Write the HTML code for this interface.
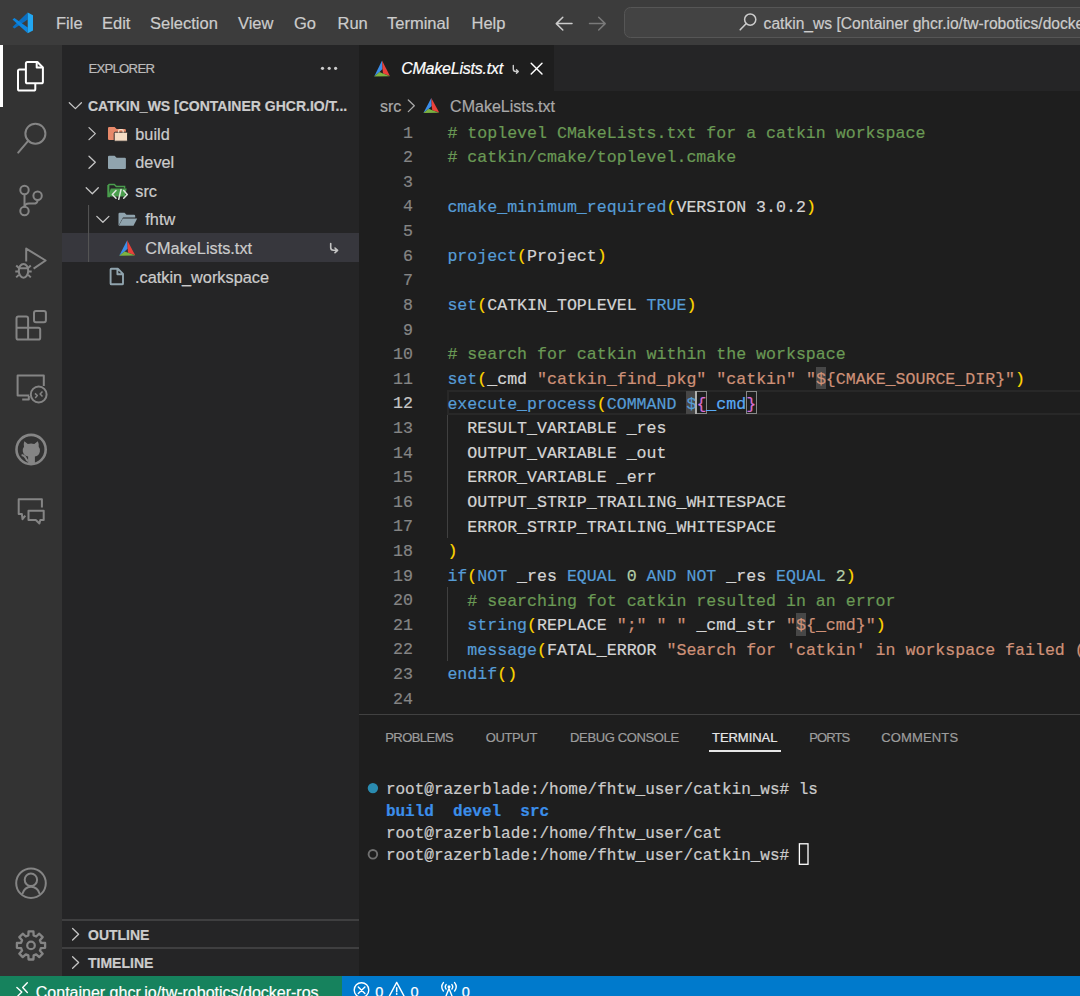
<!DOCTYPE html>
<html><head><meta charset="utf-8">
<style>
*{margin:0;padding:0;box-sizing:border-box}
html,body{width:1080px;height:996px;overflow:hidden;background:#1e1e1e;font-family:"Liberation Sans",sans-serif;color:#cccccc}
div{-webkit-text-stroke:0.2px currentColor}
.abs{position:absolute}
#title{left:0;top:0;width:1080px;height:45px;background:#3c3c3c}
.menu{position:absolute;top:13px;font-size:16.5px;color:#cccccc;line-height:20px;white-space:nowrap}
#act{left:0;top:45px;width:62px;height:931px;background:#333333}
#side{left:62px;top:45px;width:297px;height:931px;background:#252526}
#editor{left:359px;top:45px;width:721px;height:931px;background:#1e1e1e}
#status{left:0;top:976px;width:1080px;height:20px;background:#007acc}
.row{position:absolute;left:0;width:297px;height:29px;font-size:16.3px;line-height:29px;color:#cccccc;white-space:nowrap}
.code{position:absolute;left:447px;font-family:"Liberation Mono",monospace;font-size:16.6px;line-height:24.62px;white-space:pre;color:#d4d4d4}
.ln{position:absolute;left:380px;width:33px;text-align:right;font-family:"Liberation Mono",monospace;font-size:16.6px;line-height:24.62px;color:#858585}
.c{color:#6a9955}.k{color:#569cd6}.s{color:#ce9178}.p{color:#ffd700}.b{color:#da70d6}.v{color:#59aaf5}.n{color:#b5cea8}
.ptab{top:729px;font-size:13px;line-height:18px;color:#9d9d9d;white-space:nowrap}
.term{position:absolute;left:385.9px;font-family:"Liberation Mono",monospace;font-size:16px;line-height:22.2px;white-space:pre;color:#cccccc}
</style></head><body>
<div id="title" class="abs">
  <svg class="abs" style="left:0;top:0" width="1080" height="45" viewBox="0 0 1080 45" fill="none">
    <defs><linearGradient id="vsg" x1="0" y1="0" x2="1" y2="0"><stop offset="0" stop-color="#0065a9"/><stop offset="1" stop-color="#1f9cf0"/></linearGradient></defs>
    <path d="M27.7,12.6 L27.7,19.4 L14.5,28.6 L12.5,26.9 Z" fill="#0a6fc2"/>
    <path d="M12.5,19.5 L14.4,17.9 L27.7,27.4 L27.7,33.3 Z" fill="#0c86e0"/>
    <path d="M27.7,12.6 L33,15.3 V30.6 L27.7,33.3 Z" fill="#22a7f2"/>
    <path d="M572,23.6 H556.5 M562.8,17.2 L556.3,23.6 L562.8,30" stroke="#cccccc" stroke-width="1.5" stroke-linecap="round" stroke-linejoin="round"/>
    <path d="M589.5,23.6 H605 M598.7,17.2 L605.2,23.6 L598.7,30" stroke="#7a7a7a" stroke-width="1.5" stroke-linecap="round" stroke-linejoin="round"/>
    <rect x="624.5" y="7.5" width="470" height="30" rx="6" fill="#434343" stroke="#565656" stroke-width="1"/>
    <circle cx="750.2" cy="19.6" r="5.6" stroke="#cccccc" stroke-width="1.5"/>
    <path d="M746.3,23.5 L740.2,29.8" stroke="#cccccc" stroke-width="1.6" stroke-linecap="round"/>
  </svg>
  <div class="menu" style="left:763.6px;top:14.2px;font-size:15.6px">catkin_ws [Container ghcr.io/tw-robotics/docker-ros]</div>
  <div class="menu" style="left:56px">File</div>
  <div class="menu" style="left:102px">Edit</div>
  <div class="menu" style="left:150px">Selection</div>
  <div class="menu" style="left:238px">View</div>
  <div class="menu" style="left:294px">Go</div>
  <div class="menu" style="left:337.5px">Run</div>
  <div class="menu" style="left:387px">Terminal</div>
  <div class="menu" style="left:471.5px">Help</div>
</div>
<div id="act" class="abs"></div>
<svg class="abs" style="left:0;top:0" width="62" height="976" viewBox="0 0 62 976" fill="none" stroke-width="2" stroke-linejoin="round">
  <rect x="0" y="45" width="3" height="62" fill="#ffffff" stroke="none"/>
  <!-- explorer -->
  <g stroke="#ffffff">
    <path d="M27.4,62 H37.4 L42.9,67.5 V81.7 Q42.9,83.3 41.3,83.3 H27.5 Q25.9,83.3 25.9,81.7 V63.5 Q25.9,62 27.4,62 Z"/>
    <path d="M36.7,62.3 V67.6 H42.7"/>
    <path d="M25.9,69.5 H19.6 Q18,69.5 18,71.1 V88.9 Q18,90.5 19.6,90.5 H33.7 Q35.3,90.5 35.3,88.9 V83.3"/>
  </g>
  <g stroke="#858585">
    <!-- search -->
    <circle cx="35.4" cy="133.7" r="10"/>
    <path d="M28.4,140.6 L18.2,152.6" stroke-linecap="round"/>
    <!-- scm -->
    <circle cx="24.5" cy="190" r="4.2"/>
    <circle cx="24.5" cy="211" r="4.2"/>
    <circle cx="37.6" cy="195.7" r="4.2"/>
    <path d="M24.5,194.2 V206.8"/>
    <path d="M37.6,199.9 Q37.6,203.6 33.5,203.6 H29 Q24.5,203.6 24.5,207.5"/>
    <!-- debug -->
    <path d="M26.2,261.4 V248.6 L45.6,260.5 L33.6,268.6"/>
    <ellipse cx="23.5" cy="270.8" rx="4.7" ry="6.9"/>
    <path d="M19,268.3 H28 M16.2,265.4 L18.9,267.9 M30.8,265.4 L28.1,267.9 M15.3,271.5 H18.6 M28.4,271.5 H31.7 M16.2,277.4 L18.8,274.9 M30.8,277.4 L28.2,274.9"/>
    <!-- extensions -->
    <path d="M18.4,316.6 H26.2 Q28.1,316.6 28.1,318.5 V327.7 H38.3 Q40.2,327.7 40.2,329.6 V337.7 Q40.2,339.6 38.3,339.6 H18.4 Q16.5,339.6 16.5,337.7 V318.5 Q16.5,316.6 18.4,316.6 Z M16.5,327.7 H28.1 V339.6"/>
    <rect x="34" y="310.9" width="11.9" height="11.4" rx="2"/>
    <!-- remote explorer -->
    <path d="M29.2,395.6 H17.6 V375.5 H43.8 V385.9"/>
    <path d="M22.2,399.6 H28.8 V396"/>
    <circle cx="38.7" cy="394.5" r="7.9"/>
    <path d="M35,393.4 L37.3,395.6 L35.2,397.9 M42.5,391.5 L40.1,394 L42.5,396.5" stroke-width="1.5"/>
    <!-- github -->
    <circle cx="31.1" cy="449.5" r="14.6" stroke-width="2.6"/>
    <path d="M24.3,441.3 L27.8,443.9 Q31,443.2 34.3,443.9 L37.8,441.3 Q39.3,444.5 38.7,446.7 Q40.3,448.6 39.9,451.4 Q39.1,455.6 34.9,456.6 V463 Q31.5,463.8 28.1,463 V456.6 Q23.8,455.6 22.8,451.4 Q22.4,448.6 24,446.7 Q23.3,444.5 24.3,441.3 Z" fill="#858585" stroke="none"/>
    <path d="M21.6,455 Q24.5,455.4 25.8,458.2 Q26.8,460.6 28.2,461" stroke-width="2"/>
    <!-- comments -->
    <path d="M41.9,507.4 V499.2 H18.7 V514.1 H21.9 L22.5,519.2 L25.3,515.6"/>
    <path d="M28.5,510.8 H43.7 V520.1 H40.3 L39.4,523.5 L35.8,520.1 H28.5 Z"/>
    <!-- account -->
    <circle cx="31" cy="883.2" r="14.8"/>
    <circle cx="30.9" cy="879.8" r="6.2"/>
    <path d="M22.3,894 Q24.6,886.8 31,886.8 Q37.4,886.8 39.8,894"/>
    <!-- gear -->
    <path d="M28.35,935.45 L28.58,931.31 L33.42,931.31 L33.65,935.45 L36.17,936.49 L39.26,933.72 L42.68,937.14 L39.91,940.23 L40.95,942.75 L45.09,942.98 L45.09,947.82 L40.95,948.05 L39.91,950.57 L42.68,953.66 L39.26,957.08 L36.17,954.31 L33.65,955.35 L33.42,959.49 L28.58,959.49 L28.35,955.35 L25.83,954.31 L22.74,957.08 L19.32,953.66 L22.09,950.57 L21.05,948.05 L16.91,947.82 L16.91,942.98 L21.05,942.75 L22.09,940.23 L19.32,937.14 L22.74,933.72 L25.83,936.49Z" stroke-width="2.3"/>
    <circle cx="31" cy="945.4" r="3.8" stroke-width="2.2"/>
  </g>
</svg>

<div id="side" class="abs">
  <div class="abs" style="left:26.4px;top:14.3px;font-size:13.2px;line-height:20px;letter-spacing:-0.75px;color:#bbbbbb">EXPLORER</div>
  <div class="abs" style="left:0;top:188px;width:297px;height:29px;background:#37373d"></div>
  <div class="abs" style="left:26px;top:51px;font-size:14px;font-weight:bold;line-height:20px;color:#cccccc;white-space:nowrap">CATKIN_WS [CONTAINER GHCR.IO/T...</div>
  <div class="row" style="left:73.3px;top:74.65px">build</div>
  <div class="row" style="left:73.3px;top:103.25px">devel</div>
  <div class="row" style="left:73.3px;top:131.85px">src</div>
  <div class="row" style="left:83.3px;top:160.45px">fhtw</div>
  <div class="row" style="left:83.3px;top:189.05px">CMakeLists.txt</div>
  <div class="row" style="left:73px;top:217.65px">.catkin_workspace</div>
  <div class="abs" style="left:0;top:874px;width:297px;height:2px;background:#3f3f40"></div>
  <div class="abs" style="left:0;top:902.2px;width:297px;height:2px;background:#3f3f40"></div>
  <div class="abs" style="left:26px;top:880.15px;font-size:14px;font-weight:bold;line-height:20px;color:#cccccc">OUTLINE</div>
  <div class="abs" style="left:26px;top:908.45px;font-size:14px;font-weight:bold;line-height:20px;color:#cccccc">TIMELINE</div>
</div>
<svg class="abs" style="left:62px;top:45px" width="297" height="931" viewBox="62 45 297 931" fill="none">
  <g fill="#cccccc"><circle cx="322.5" cy="68.3" r="1.6"/><circle cx="329.2" cy="68.3" r="1.6"/><circle cx="335.6" cy="68.3" r="1.6"/></g>
  <g stroke="#c5c5c5" stroke-width="1.3" stroke-linecap="round" stroke-linejoin="round">
    <path d="M69.3,102.8 L75.4,108.6 L81.4,102.8"/>
    <path d="M89,127.6 L95.3,133.6 L89,139.6"/>
    <path d="M89,156.3 L95.3,162.3 L89,168.3"/>
    <path d="M86.2,187.7 L92.3,193.7 L98.3,187.7"/>
    <path d="M96.8,216.4 L102.9,222.3 L108.9,216.4"/>
    <path d="M72.6,928.5 L78.6,934.2 L72.6,940"/>
    <path d="M72.6,956.7 L78.6,962.5 L72.6,968.3"/>
  </g>
  <path d="M88.6,205 V262" stroke="#585858" stroke-width="1"/>
  <!-- build folder -->
  <path d="M108,128.2 Q108,127.1 109.1,127.1 H114.6 L116.6,129.1 H124.8 Q125.9,129.1 125.9,130.2 V138.9 Q125.9,140 124.8,140 H109.1 Q108,140 108,138.9 Z" fill="#e8896a"/>
  <path d="M115.2,132.2 H126.5 Q127.5,132.2 127.5,133.2 V140.2 Q127.5,141.2 126.5,141.2 H115.2 Q114.2,141.2 114.2,140.2 V133.2 Q114.2,132.2 115.2,132.2 Z" fill="#f6dcc4" stroke="#252526" stroke-width="0.9"/>
  <path d="M118.6,132.4 V131 Q118.6,129.6 120,129.6 H121.8 Q123.2,129.6 123.2,131 V132.4" stroke="#f6dcc4" stroke-width="1.3"/>
  <!-- devel folder -->
  <path d="M108,156.8 Q108,155.7 109.1,155.7 H114.6 L116.6,157.7 H124.8 Q125.9,157.7 125.9,158.8 V167.9 Q125.9,169 124.8,169 H109.1 Q108,169 108,167.9 Z" fill="#90a4ae"/>
  <!-- src folder green -->
  <path d="M108.7,196 V185.2 Q108.7,184.5 109.4,184.5 H114.3 L116.3,186.5 H124.6 V188.6" stroke="#4a9e4d" stroke-width="1.4"/>
  <path d="M110.8,188.6 H126.7 L125,196.5 H108 Z" fill="#4a9e4d"/>
  <path d="M108,185 V196.5 H110" stroke="#4a9e4d" stroke-width="1.4"/>
  <g stroke="#dfe6df" stroke-width="1.5" stroke-linecap="round" stroke-linejoin="round"><path d="M116,190.6 L112.3,194.4 L116,198.2 M123.7,190.6 L127.3,194.4 L123.7,198.2 M121,189.6 L118.7,199.3"/></g>
  <!-- fhtw open folder -->
  <path d="M118.5,214 Q118.5,212.8 119.7,212.8 H124.5 L126.5,214.8 H134 Q135.2,214.8 135.2,216 V217.5 H123 L118.5,225.7 Z" fill="#90a4ae"/>
  <path d="M122.8,218.6 H137.2 L133.5,225.7 H118.8 Z" fill="#90a4ae"/>
  <!-- cmake icon -->
  <use href="#cmk" transform="translate(119.2,240.3) scale(16,15.5)"/>
  <!-- file icon -->
  <path d="M111.4,268.7 H117.8 L123,273.9 V283.4 Q123,284.3 122.1,284.3 H111.4 Q110.6,284.3 110.6,283.4 V269.5 Q110.6,268.7 111.4,268.7 Z M117.4,269 V274.3 H122.8" stroke="#90a4ae" stroke-width="1.9" stroke-linejoin="round"/>
  <!-- arrow symbol -->
  <path d="M330.7,243.5 V247.5 Q330.7,250.3 333.5,250.3 H337 M335,248 L337.6,250.3 L335,252.6" stroke="#c5c5c5" stroke-width="1.6" stroke-linecap="round" stroke-linejoin="round"/>
</svg>
<div id="editor" class="abs"></div>
<!-- tabs -->
<div class="abs" style="left:359px;top:45px;width:721px;height:46px;background:#252526"></div>
<div class="abs" style="left:359px;top:45px;width:195px;height:46px;background:#1e1e1e"></div>
<div class="abs" style="left:401.2px;top:59px;font-size:16px;line-height:20px;font-style:italic;letter-spacing:-0.23px;color:#ffffff;white-space:nowrap">CMakeLists.txt</div>
<div class="abs" style="left:379.9px;top:97px;font-size:16px;line-height:20px;color:#a9a9a9;white-space:nowrap">src</div>
<div class="abs" style="left:450.1px;top:97px;font-size:16px;line-height:20px;color:#a9a9a9;white-space:nowrap">CMakeLists.txt</div>
<svg class="abs" style="left:359px;top:45px" width="721" height="80" viewBox="359 45 721 80" fill="none">
  <defs>
    <g id="cmk">
      <path d="M0.5,0 L0,1 L0.34,0.72 L0.53,0.53 Z" fill="#3b8eea"/>
      <path d="M0.5,0 L0.53,0.53 L0.56,0.81 L1,0.97 Z" fill="#e8403a"/>
      <path d="M0,1 L1,0.98 L0.56,0.81 L0.34,0.72 Z" fill="#7cb342"/>
      
    </g>
  </defs>
  <use href="#cmk" transform="translate(374.2,60.5) scale(15.7,16)"/>
  <use href="#cmk" transform="translate(423.4,98) scale(15.8,15)"/>
  <path d="M513.3,65.5 V69 Q513.3,71.5 515.8,71.5 H518 M516.5,69.8 L518.3,71.5 L516.5,73.2" stroke="#cccccc" stroke-width="1.4" stroke-linecap="round" stroke-linejoin="round"/>
  <path d="M531.2,63.2 L542,74 M542,63.2 L531.2,74" stroke="#ffffff" stroke-width="1.45" stroke-linecap="round"/>
  <path d="M408.3,100 L414.3,105.8 L408.3,111.6" stroke="#a9a9a9" stroke-width="1.3" stroke-linecap="round" stroke-linejoin="round"/>
</svg>
<!-- current line -->
<div class="abs" style="left:447.2px;top:390.42px;width:700px;height:24.62px;border:2px solid #282828"></div>
<!-- word highlights -->
<div class="abs" style="left:815.92px;top:366.80px;width:9.96px;height:22.62px;background:#474747"></div>
<div class="abs" style="left:686.44px;top:391.42px;width:9.96px;height:22.62px;background:#474747"></div>
<div class="abs" style="left:796.00px;top:613.00px;width:9.96px;height:22.62px;background:#474747"></div>
<div class="abs" style="left:696.40px;top:391.42px;width:10.96px;height:22.62px;border:1px solid #888888"></div>
<div class="abs" style="left:746.20px;top:391.42px;width:10.96px;height:22.62px;border:1px solid #888888"></div>
<!-- indent guides -->
<div class="abs" style="left:447px;top:415.04px;width:1.3px;height:123.10px;background:#404040"></div>
<div class="abs" style="left:447px;top:587.38px;width:1.3px;height:73.86px;background:#404040"></div>
<div class="abs" style="left:373px;top:121.66px;width:40px;text-align:right;font-family:'Liberation Mono',monospace;font-size:16.6px;line-height:24.62px;color:#858585"><div style="height:24.62px;">1</div><div style="height:24.62px;">2</div><div style="height:24.62px;">3</div><div style="height:24.62px;">4</div><div style="height:24.62px;">5</div><div style="height:24.62px;">6</div><div style="height:24.62px;">7</div><div style="height:24.62px;">8</div><div style="height:24.62px;">9</div><div style="height:24.62px;">10</div><div style="height:24.62px;">11</div><div style="height:24.62px;color:#c6c6c6">12</div><div style="height:24.62px;">13</div><div style="height:24.62px;">14</div><div style="height:24.62px;">15</div><div style="height:24.62px;">16</div><div style="height:24.62px;">17</div><div style="height:24.62px;">18</div><div style="height:24.62px;">19</div><div style="height:24.62px;">20</div><div style="height:24.62px;">21</div><div style="height:24.62px;">22</div><div style="height:24.62px;">23</div><div style="height:24.62px;">24</div></div>
<div class="code" style="left:447.4px;top:121.66px"><span class="c"># toplevel CMakeLists.txt for a catkin workspace</span>
<span class="c"># catkin/cmake/toplevel.cmake</span>

<span class="k">cmake_minimum_required</span><span class="p">(</span>VERSION 3.0.2<span class="p">)</span>

<span class="k">project</span><span class="p">(</span>Project<span class="p">)</span>

<span class="k">set</span><span class="p">(</span>CATKIN_TOPLEVEL <span class="k">TRUE</span><span class="p">)</span>

<span class="c"># search for catkin within the workspace</span>
<span class="k">set</span><span class="p">(</span>_cmd <span class="s">"catkin_find_pkg"</span> <span class="s">"catkin"</span> <span class="s">"${CMAKE_SOURCE_DIR}"</span><span class="p">)</span>
<span class="k">execute_process</span><span class="p">(</span><span class="k">COMMAND</span> <span class="k">$</span><span class="b">{</span><span class="v">_cmd</span><span class="b">}</span>
  RESULT_VARIABLE _res
  OUTPUT_VARIABLE _out
  ERROR_VARIABLE _err
  OUTPUT_STRIP_TRAILING_WHITESPACE
  ERROR_STRIP_TRAILING_WHITESPACE
<span class="p">)</span>
<span class="k">if</span><span class="p">(</span><span class="k">NOT</span> _res <span class="k">EQUAL</span> <span class="n">0</span> <span class="k">AND</span> <span class="k">NOT</span> _res <span class="k">EQUAL</span> <span class="n">2</span><span class="p">)</span>
  <span class="c"># searching fot catkin resulted in an error</span>
  <span class="k">string</span><span class="p">(</span>REPLACE <span class="s">";"</span> <span class="s">" "</span> _cmd_str <span class="s">"${_cmd}"</span><span class="p">)</span>
  <span class="k">message</span><span class="p">(</span>FATAL_ERROR <span class="s">"Search for 'catkin' in workspace failed (${_cmd_str}): ${_err}"</span><span class="p">)</span>
<span class="k">endif</span><span class="p">()</span>
</div>
<!-- cursor -->
<div class="abs" style="left:695.40px;top:391.42px;width:2px;height:22.62px;background:#aeafad"></div>

<!-- panel -->
<div class="abs" style="left:359px;top:713.5px;width:721px;height:262.5px;background:#1e1e1e;border-top:1px solid #414141"></div>
<div class="abs ptab" style="left:385.2px;letter-spacing:-0.55px">PROBLEMS</div>
<div class="abs ptab" style="left:485.7px;letter-spacing:-0.36px">OUTPUT</div>
<div class="abs ptab" style="left:570.1px;letter-spacing:-0.37px">DEBUG CONSOLE</div>
<div class="abs ptab" style="left:712px;letter-spacing:-0.05px;color:#e7e7e7">TERMINAL</div>
<div class="abs" style="left:708.7px;top:750px;width:72px;height:1.5px;background:#e7e7e7"></div>
<div class="abs ptab" style="left:809.3px;letter-spacing:-0.9px">PORTS</div>
<div class="abs ptab" style="left:881.3px;letter-spacing:0.14px">COMMENTS</div>
<div class="term" style="top:778.6px">root@razerblade:/home/fhtw_user/catkin_ws# ls
<b style="color:#3b8eea">build</b>  <b style="color:#3b8eea">devel</b>  <b style="color:#3b8eea">src</b>
root@razerblade:/home/fhtw_user/cat
root@razerblade:/home/fhtw_user/catkin_ws# </div>
<svg class="abs" style="left:359px;top:714px" width="721" height="262" viewBox="359 714 721 262" fill="none">
  <circle cx="372.9" cy="788.1" r="5.2" fill="#2a8bb0"/>
  <circle cx="372.9" cy="854.3" r="4.3" stroke="#707070" stroke-width="1.9"/>
  <rect x="799.4" y="843.8" width="8.6" height="20.5" stroke="#ffffff" stroke-width="1.3"/>
</svg>
<div id="status" class="abs">
  <div class="abs" style="left:0;top:0;width:342px;height:20px;background:#16825d"></div>
  <div class="abs" style="left:35.8px;top:6.5px;font-size:16px;line-height:20px;color:#ffffff;white-space:nowrap">Container ghcr.io/tw-robotics/docker-ros</div>
  <div class="abs" style="left:375.3px;top:5.8px;font-size:14.5px;line-height:20px;color:#ffffff">0</div>
  <div class="abs" style="left:410.5px;top:5.8px;font-size:14.5px;line-height:20px;color:#ffffff">0</div>
  <div class="abs" style="left:461.7px;top:5.8px;font-size:14.5px;line-height:20px;color:#ffffff">0</div>
  <svg class="abs" style="left:0;top:0" width="1080" height="20" viewBox="0 976 1080 20" fill="none" stroke="#ffffff" stroke-width="1.4" stroke-linecap="round" stroke-linejoin="round">
    <path d="M16.9,987.4 L21.8,992 L17.4,996.5 M27.3,982.7 L22.7,987.6 L27.3,992.4"/>
    <circle cx="361.5" cy="990" r="7.3"/>
    <path d="M358.3,987 L364.9,993.6 M364.9,987 L358.3,993.6"/>
    <path d="M396.7,982.4 L388.6,997.5 M396.7,982.4 L404.8,997.5"/>
    <path d="M396.7,987.8 V991.8" stroke-width="1.5"/>
    <circle cx="396.7" cy="994" r="0.9" fill="#ffffff" stroke="none"/>
    <path d="M443.4,982.6 Q440.1,986.8 443.4,991 M454.6,982.6 Q457.9,986.8 454.6,991 M446.1,984.6 Q444.4,986.8 446.1,989 M451.9,984.6 Q453.6,986.8 451.9,989 M449,988.6 L445.8,996.5 M449,988.6 L452.2,996.5"/>
    <circle cx="449" cy="986.8" r="1.5" fill="#ffffff" stroke="none"/>
  </svg>
</div>
</body></html>
